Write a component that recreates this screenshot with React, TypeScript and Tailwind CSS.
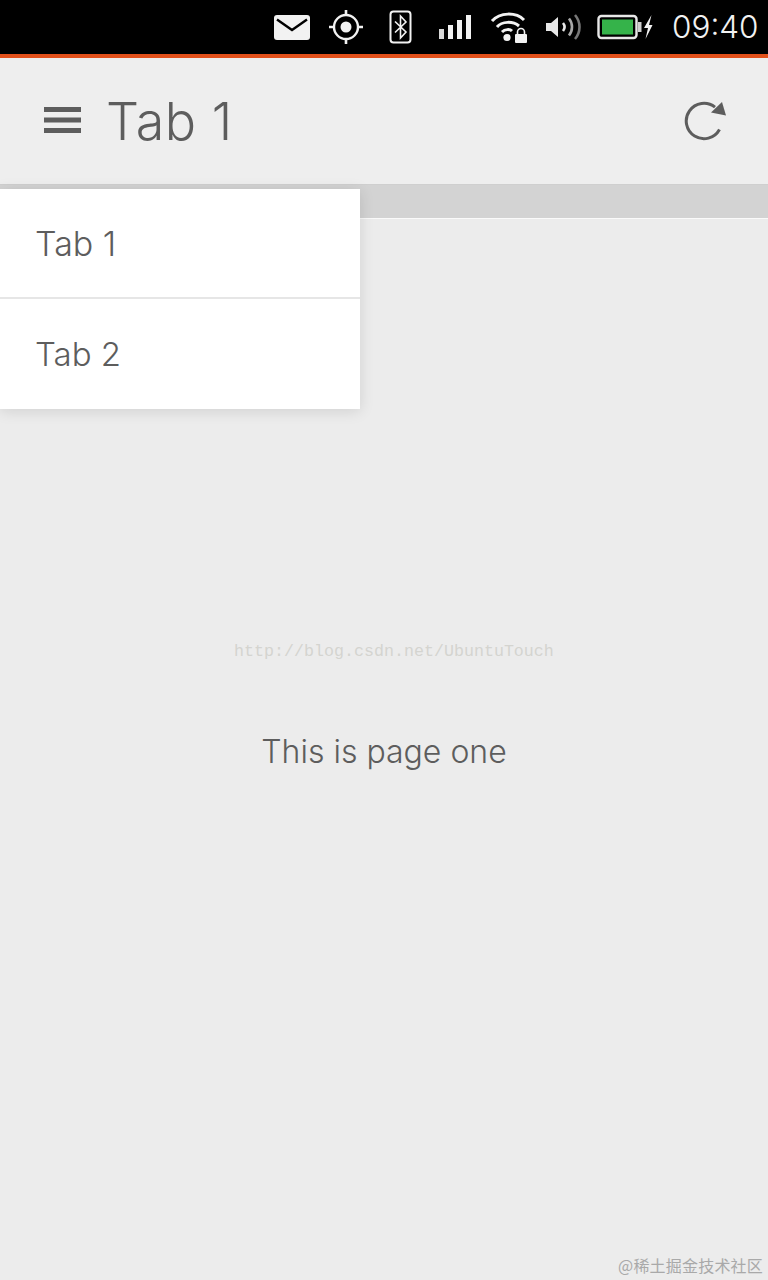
const StatusIcons = () => (
  <div className="flex items-center h-[54px] text-white">
    {/* mail */}
    <svg width="38" height="26" viewBox="0 0 38 26" className="ml-[273px] shrink-0">
      <rect x="1" y="1" width="36" height="25" rx="3" fill="#f2f2f2" />
      <path d="M4 5.500 L19 16 L34 5.500" fill="none" stroke="#000" strokeWidth="2.400" />
    </svg>
    {/* location */}
    <svg width="36" height="36" viewBox="0 0 36 36" className="ml-[17px] shrink-0">
      <circle cx="18" cy="18" r="12" fill="none" stroke="#f2f2f2" strokeWidth="2.400" />
      <circle cx="18" cy="18" r="5.500" fill="#f2f2f2" />
      <path d="M18 1v5M18 30v5M1 18h5M30 18h5" stroke="#f2f2f2" strokeWidth="2.600" />
    </svg>
    {/* bluetooth */}
    <svg width="24" height="34" viewBox="0 0 24 34" className="ml-[25px] shrink-0">
      <rect x="1.500" y="1.500" width="20" height="31" rx="3" fill="none" stroke="#f2f2f2" strokeWidth="2" />
      <path d="M6 11.500 L17 22 L11.500 28 V6 L17 12 L6 22.500" fill="none" stroke="#f2f2f2" strokeWidth="1.600" />
    </svg>
    {/* signal */}
    <svg width="34" height="26" viewBox="0 0 34 26" className="ml-[25px] shrink-0">
      <rect x="1" y="15" width="5" height="10" fill="#d8d8d8" />
      <rect x="10" y="11" width="5" height="14" fill="#f2f2f2" />
      <rect x="19" y="6" width="5" height="19" fill="#f2f2f2" />
      <rect x="28" y="1" width="5" height="24" fill="#f2f2f2" />
    </svg>
    {/* wifi with lock */}
    <svg width="38" height="32" viewBox="0 0 38 32" className="ml-[18px] shrink-0">
      <path d="M2 10 C10 1 26 1 34 9" fill="none" stroke="#f2f2f2" strokeWidth="3" />
      <path d="M7 16 C12 10 23 10 29 15" fill="none" stroke="#f2f2f2" strokeWidth="3" />
      <path d="M12 21 C15 18 20 18 22 20" fill="none" stroke="#f2f2f2" strokeWidth="3" />
      <circle cx="17" cy="26.500" r="3.600" fill="#f2f2f2" />
      <path d="M27.500 23v-2a3.500 3.500 0 0 1 7 0v2" fill="none" stroke="#f2f2f2" strokeWidth="1.600" />
      <rect x="25" y="23" width="12" height="9" rx="1" fill="#f2f2f2" />
    </svg>
    {/* volume */}
    <svg width="36" height="26" viewBox="0 0 36 26" className="ml-[17px] shrink-0">
      <path d="M1 9h5l7-6v20l-7-6H1z" fill="#e8e8e8" />
      <path d="M18 9c2 2.500 2 5.500 0 8" fill="none" stroke="#e8e8e8" strokeWidth="2.600" />
      <path d="M24 4.500c4 5 4 12 0 17" fill="none" stroke="#a8a8a8" strokeWidth="2.600" />
      <path d="M30 1c6 7 6 17 0 24" fill="none" stroke="#777" strokeWidth="2.600" />
    </svg>
    {/* battery */}
    <svg width="56" height="26" viewBox="0 0 56 26" className="ml-[16px] shrink-0">
      <rect x="1.500" y="2" width="38" height="22" rx="3" fill="none" stroke="#e8e8e8" strokeWidth="2.400" />
      <rect x="5" y="5.500" width="31" height="15" fill="#35b34a" />
      <rect x="41" y="8" width="3.500" height="10" fill="#cfcfcf" />
      <path d="M54.500 1 L47 14 H51 L48.500 25 L55.500 11 H52z" fill="#f2f2f2" />
    </svg>
    <span className="ml-[19px] text-[31.5px] leading-none font-light text-[#f2f2f2] font-['Inter',sans-serif]">
      09:40
    </span>
  </div>
);

const App = () => {
  return (
    <div className="relative flex h-[1280px] w-[768px] flex-col overflow-hidden bg-[#ececec] font-['Inter',sans-serif] text-[#5d5d5d]">
      <div className="h-[54px] shrink-0 bg-black">
        <StatusIcons />
      </div>
      <div className="h-[4px] shrink-0 bg-[#e2501a]" />

      {/* Header */}
      <header className="flex h-[127px] shrink-0 items-center justify-between border-b border-b-[#cfcfcf] bg-[#eeeeee] pl-[44px] pr-[40px]">
        <div className="flex items-center">
          <svg width="37" height="26" viewBox="0 0 37 26" className="-mt-[2px] shrink-0">
            <rect y="0" width="37" height="5" fill="#5d5d5d" />
            <rect y="10.500" width="37" height="5" fill="#5d5d5d" />
            <rect y="21" width="37" height="5" fill="#5d5d5d" />
          </svg>
          <h1 className="ml-[25px] mt-[2px] text-[52px] font-light leading-none tracking-[0.5px]">Tab 1</h1>
        </div>
        <svg width="44" height="44" viewBox="0 0 44 44" className="shrink-0">
          <path d="M35.500 30.500 A17.700 17.700 0 1 1 31 8.200" fill="none" stroke="#5d5d5d" strokeWidth="3" />
          <path d="M27 13.500 L42 16.500 L38 3z" fill="#5d5d5d" />
        </svg>
      </header>

      {/* Tab band */}
      <div className="h-[34px] shrink-0 border-b border-b-[#fafafa] bg-[#d3d3d3]" />

      {/* Page body */}
      <main className="flex flex-1 flex-col items-center pt-[511px]">
        <p className="text-[32px] font-light leading-[44px]">This is page one</p>
      </main>

      {/* Tab dropdown */}
      <div className="absolute left-0 top-[189px] w-[360px] bg-white shadow-[0_2px_14px_rgba(0,0,0,0.12)]">
        <div className="flex h-[108px] items-center pl-[35px] pt-[2px] text-[34px] font-light leading-none">Tab 1</div>
        <div className="h-[2px] bg-[#e6e6e6]" />
        <div className="flex h-[110px] items-center pl-[35px] text-[33px] font-light leading-none">Tab 2</div>
      </div>

      {/* Watermarks */}
      <div className="absolute left-[234px] top-[641px] font-['Liberation_Mono',monospace] text-[16.67px] leading-[22px] text-[#d4d4d0]">
        http://blog.csdn.net/UbuntuTouch
      </div>
      <div className="absolute right-[5px] top-[1254px] font-['Noto_Sans_CJK_SC',sans-serif] text-[16px] leading-[22px] tracking-[0.2px] text-[#a9a9a9]">
        @稀土掘金技术社区
      </div>
    </div>
  );
};

export default App;
